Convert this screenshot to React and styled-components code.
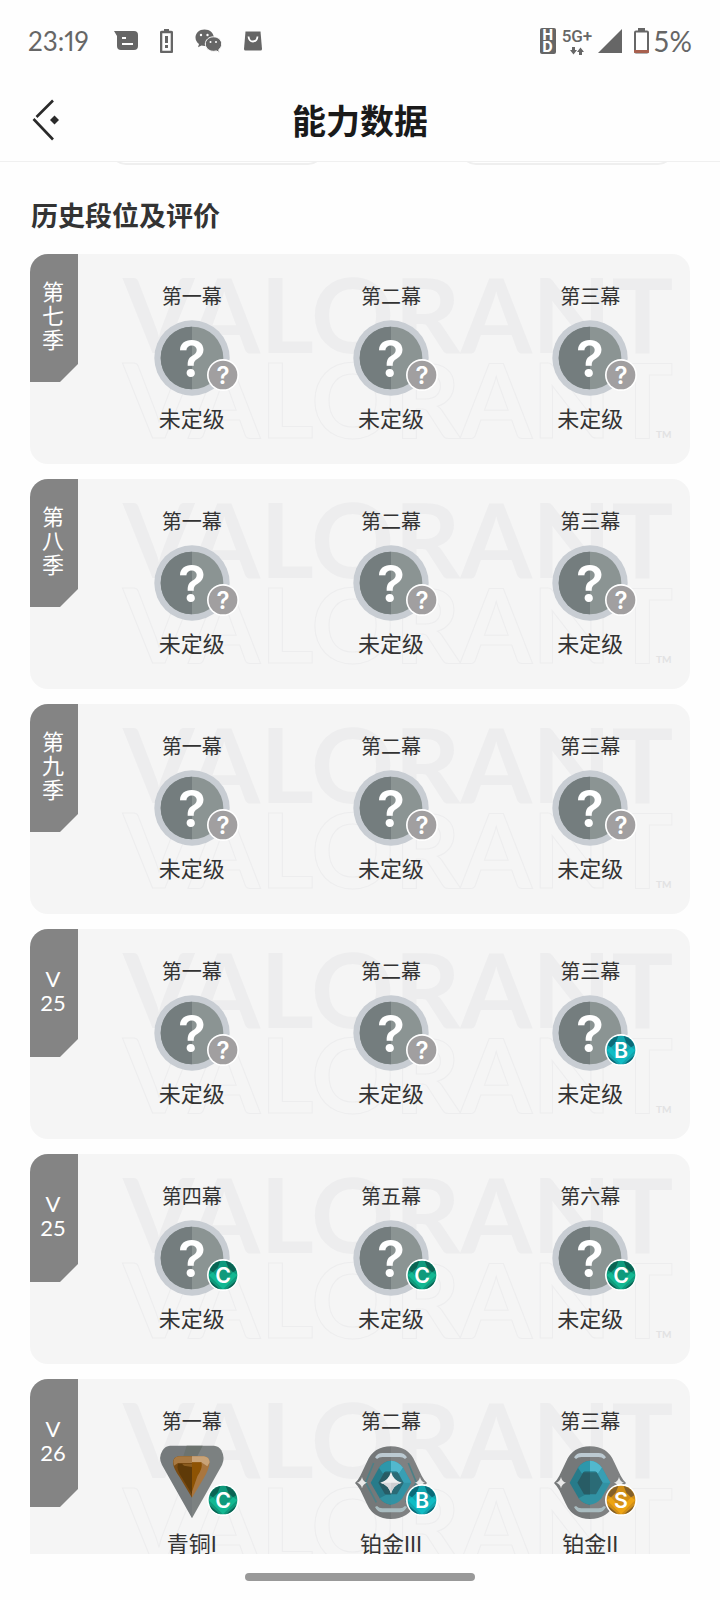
import React from "react";
import styled, { createGlobalStyle } from "styled-components";

const seasons = [
  {
    id: "s7",
    tag: ["第", "七", "季"],
    acts: [
      { name: "第一幕", rank: "未定级", emblem: "none", grade: "?" },
      { name: "第二幕", rank: "未定级", emblem: "none", grade: "?" },
      { name: "第三幕", rank: "未定级", emblem: "none", grade: "?" },
    ],
  },
  {
    id: "s8",
    tag: ["第", "八", "季"],
    acts: [
      { name: "第一幕", rank: "未定级", emblem: "none", grade: "?" },
      { name: "第二幕", rank: "未定级", emblem: "none", grade: "?" },
      { name: "第三幕", rank: "未定级", emblem: "none", grade: "?" },
    ],
  },
  {
    id: "s9",
    tag: ["第", "九", "季"],
    acts: [
      { name: "第一幕", rank: "未定级", emblem: "none", grade: "?" },
      { name: "第二幕", rank: "未定级", emblem: "none", grade: "?" },
      { name: "第三幕", rank: "未定级", emblem: "none", grade: "?" },
    ],
  },
  {
    id: "v25-1",
    tag: ["V", "25"],
    acts: [
      { name: "第一幕", rank: "未定级", emblem: "none", grade: "?" },
      { name: "第二幕", rank: "未定级", emblem: "none", grade: "?" },
      { name: "第三幕", rank: "未定级", emblem: "none", grade: "B" },
    ],
  },
  {
    id: "v25-2",
    tag: ["V", "25"],
    acts: [
      { name: "第四幕", rank: "未定级", emblem: "none", grade: "C" },
      { name: "第五幕", rank: "未定级", emblem: "none", grade: "C" },
      { name: "第六幕", rank: "未定级", emblem: "none", grade: "C" },
    ],
  },
  {
    id: "v26-1",
    tag: ["V", "26"],
    acts: [
      { name: "第一幕", rank: "青铜I", emblem: "bronze", grade: "C" },
      { name: "第二幕", rank: "铂金III", emblem: "platinum3", grade: "B" },
      { name: "第三幕", rank: "铂金II", emblem: "platinum2", grade: "S" },
    ],
  },
];

const gradeColors = {
  "?": { base: "#a19fa0" },
  B: { base: "#12a5ae", dark: "#0b6a78", light: "#10bcc4" },
  C: { base: "#0f9a7c", dark: "#0a6454", light: "#12b892" },
  S: { base: "#d28f17", dark: "#84602a", light: "#eda414" },
};

function StatusIcons() {
  return (
    <StIconGroup>
      <svg width="24" height="20" viewBox="0 0 24 20">
        <path
          d="M0 0H20Q24 0 24 4V15Q24 19 20 19H7Q3 19 3 15V5Z"
          fill="#666"
        />
        <path d="M8 7h4M8 13h11" stroke="#fff" strokeWidth="2" />
      </svg>
      <svg width="13" height="24" viewBox="0 0 13 24">
        <path d="M4 0h5v3H4z" fill="#666" />
        <rect x="1" y="3" width="11" height="20" rx="1" fill="#fff" stroke="#666" strokeWidth="2.600" />
        <path d="M5 7h3v7H5zM5 16h3v3H5z" fill="#666" />
      </svg>
      <svg width="27" height="24" viewBox="0 0 27 24">
        <path
          d="M9.500 0.500C4.300 0.500 0.500 4 0.500 8.600C0.500 11.200 1.800 13.500 4 15L3 18.200L6.500 16.400C7.400 16.700 8.500 16.900 9.500 16.900C14.700 16.900 18.800 13.300 18.800 8.700C18.800 4 14.700 0.500 9.500 0.500Z"
          fill="#666"
        />
        <path
          d="M18.500 7.800C13.800 7.800 10.300 11 10.300 15C10.300 19 13.900 22.300 18.500 22.300C19.500 22.300 20.500 22.100 21.300 21.900L24.500 23.500L23.700 20.700C25.600 19.300 26.700 17.300 26.700 15C26.700 11 23.200 7.800 18.500 7.800Z"
          fill="#666"
          stroke="#fff"
        />
        <circle cx="6" cy="6" r="1.200" fill="#fff" />
        <circle cx="12.500" cy="6" r="1.200" fill="#fff" />
        <circle cx="15.500" cy="13" r="1" fill="#fff" />
        <circle cx="21" cy="13" r="1" fill="#fff" />
      </svg>
      <svg width="18" height="20" viewBox="0 0 18 20">
        <path d="M1.500 0.500H16.500L18 18Q18 19.500 16.500 19.500H1.500Q0 19.500 0 18Z" fill="#666" />
        <path d="M4.500 5.500Q5 10.500 9 10.500Q13 10.500 13.500 5.500" fill="none" stroke="#fff" strokeWidth="1.800" />
      </svg>
    </StIconGroup>
  );
}

function UnrankedEmblem() {
  return (
    <StEmblemSvg viewBox="0 0 228 228">
      <circle cx="114" cy="114" r="113" fill="#c8cdd3" />
      <circle cx="114" cy="114" r="94" fill="#8b9493" />
      <path d="M114 20a94 94 0 0 0 0 188z" fill="#747d7e" />
      <StGlyph x="114" y="170" size={154}>
        ?
      </StGlyph>
    </StEmblemSvg>
  );
}

function BronzeEmblem() {
  return (
    <StEmblemSvg viewBox="0 0 228 228">
      <path d="M48 2H114V220L24 60Q12 38 26 16Q34 3 48 2Z" fill="#757a7c" />
      <path d="M114 2H180Q194 3 202 16Q214 38 204 60L114 220Z" fill="#7c8181" />
      <path d="M98 2H114V34H88ZM114 2H146L130 34H114Z" fill="#6c736f" />
      <path d="M74 34H114V158L78 98Q58 72 57 52Q58 36 74 34Z" fill="#7a4a10" />
      <path d="M114 34H150Q166 36 167 52Q165 74 150 98L114 158Z" fill="#a9763e" />
      <path d="M74 34H114V54H72L60 62Q52 38 74 34Z" fill="#a87942" />
      <path d="M114 34H150Q166 36 167 52L160 64L142 52H114Z" fill="#c9a377" />
      <path d="M72 56H114V148L84 98Q66 72 72 56Z" fill="#5f3a08" />
      <path d="M114 52H142Q148 68 130 94L114 140Z" fill="#8e5303" />
      <path d="M84 56H114V66L90 62Z" fill="#8b5c1f" />
    </StEmblemSvg>
  );
}

function PlatinumEmblem({ star }) {
  return (
    <StEmblemSvg viewBox="0 0 228 228">
      <path d="M6 114Q16 104 22 92L42 50Q62 4 114 4V222Q62 222 42 178L22 136Q16 124 6 114Z" fill="#757879" />
      <path d="M222 114Q212 104 206 92L186 50Q166 4 114 4V222Q166 222 186 178L206 136Q212 124 222 114Z" fill="#7f8182" />
      {star && (
        <path
          d="M62 54L38 112L70 172M166 54L190 112L158 172"
          fill="none"
          stroke="#4d8087"
          strokeWidth="5"
        />
      )}
      <path d="M66 37Q74 24 88 24H140Q154 24 162 37L156 42Q150 36 140 36H88Q78 36 72 42Z" fill="#bccad2" />
      <path d="M66 186Q74 202 88 202H140Q154 202 162 186L156 183Q150 190 140 190H88Q78 190 72 183Z" fill="#a9bcc0" />
      <path d="M53 113L78 68Q92 48 114 47V179Q94 178 80 160Z" fill="#277b8a" />
      <path d="M175 113L150 68Q136 48 114 47V179Q134 178 148 160Z" fill="#3192a4" />
      <path d="M78 68Q92 48 114 47V78H98L90 86Z" fill="#2d97ab" />
      <path d="M114 47Q136 48 150 68L138 86L130 78H114Z" fill="#52b8ce" />
      <path d="M150 68L175 113H150L138 86Z" fill="#389fb4" />
      <path d="M80 160Q94 178 114 179V150H98Z" fill="#3191a0" />
      <path d="M76 113L94 82H114V148H96Z" fill="#285c65" />
      <path d="M152 113L134 82H114V148H132Z" fill="#2b6b76" />
      {star && (
        <g>
          <path d="M114 80Q121 106 146 113Q121 120 114 146Q107 120 82 113Q107 106 114 80Z" fill="#f0f0f1" />
          <path d="M114 113H146Q121 120 114 146Z" fill="#cfcfd2" />
          <path d="M82 113H114V146Q107 120 82 113Z" fill="#d9d9dc" />
        </g>
      )}
      <path d="M27 96Q30 110 42 113Q30 116 27 130Q24 116 12 113Q24 110 27 96Z" fill="#e9e9e9" />
      <path d="M201 96Q204 110 216 113Q204 116 201 130Q198 116 186 113Q198 110 201 96Z" fill="#e9e9e9" />
    </StEmblemSvg>
  );
}

function Emblem({ kind }) {
  if (kind === "bronze") return <BronzeEmblem />;
  if (kind === "platinum3") return <PlatinumEmblem star />;
  if (kind === "platinum2") return <PlatinumEmblem />;
  return <UnrankedEmblem />;
}

function GradeBadge({ grade }) {
  const c = gradeColors[grade];
  const graded = grade !== "?";
  return (
    <StGrade viewBox="0 0 96 96">
      <circle cx="48" cy="48" r="48" fill="#fff" />
      <circle cx="48" cy="48" r="43" fill={c.base} />
      {graded && (
        <g>
          <path d="M8 34Q16 12 40 6L32 26L18 40Z" fill={c.dark} />
          <path d="M88 34Q80 12 56 6L64 26L78 40Z" fill={c.dark} />
          <path d="M5 48L18 40L48 72L78 40L91 48L48 91Z" fill={c.light} />
          <path d="M8 64L38 90Q16 86 8 64Z" fill={c.dark} />
          <path d="M88 64L58 90Q80 86 88 64Z" fill={c.dark} />
        </g>
      )}
      <StGlyph x="48" y={graded ? 71 : 74} size={graded ? 64 : 72}>
        {grade}
      </StGlyph>
    </StGrade>
  );
}

function Watermark() {
  return (
    <StWatermark viewBox="0 0 660 210" aria-hidden="true">
      <text x="93" y="99" fontSize="103" fill="#ededee">
        VALORANT
      </text>
      <text x="93" y="184" fontSize="103" fill="none" stroke="#ededee">
        VALORANT
      </text>
      <text x="626" y="184" fontSize="10" fill="#e2e2e3">
        TM
      </text>
    </StWatermark>
  );
}

function SeasonCard({ season }) {
  return (
    <StCard>
      <Watermark />
      <StTag>
        {season.tag.map((line) => {
          return <span key={line}>{line}</span>;
        })}
      </StTag>
      <StActs>
        {season.acts.map((act) => {
          return (
            <StAct key={act.name}>
              <StActName>{act.name}</StActName>
              <StEmblemWrap>
                <Emblem kind={act.emblem} />
                <GradeBadge grade={act.grade} />
              </StEmblemWrap>
              <StRank>{act.rank}</StRank>
            </StAct>
          );
        })}
      </StActs>
    </StCard>
  );
}

function App() {
  return (
    <StPage>
      <GlobalStyle />
      <StStatusBar>
        <StClock>23:19</StClock>
        <StatusIcons />
        <StStatusRight>
          <StHd>
            <span>H</span>
            <span>D</span>
          </StHd>
          <StNetwork>
            <span>5G+</span>
            <svg width="14" height="8" viewBox="0 0 14 8">
              <path d="M2 0h3v3h2L3.500 7.500L0 3h2zM9 8h3V5h2L10.500 0.500L7 5h2z" fill="#666" />
            </svg>
          </StNetwork>
          <svg width="24" height="24" viewBox="0 0 24 24">
            <path d="M24 0V24H0Z" fill="#666" />
          </svg>
          <StBattery>
            <svg width="15" height="26" viewBox="0 0 15 26">
              <path d="M4 0h7v3H4z" fill="#666" />
              <rect x="1" y="3.500" width="13" height="21" rx="1" fill="none" stroke="#666" strokeWidth="2" />
              <path d="M0 22h15v2q0 1-1 1H1q-1 0-1-1z" fill="#a8604e" />
            </svg>
            <span>5%</span>
          </StBattery>
        </StStatusRight>
      </StStatusBar>
      <StHeader>
        <StBack type="button" aria-label="返回">
          <svg width="28" height="42" viewBox="0 0 28 42">
            <path d="M21 1.500L4.500 18M1.500 20L21 40.500" fill="none" stroke="#2a2a2a" strokeWidth="2.600" />
            <path d="M22.500 16.500L27 21L22.500 25.500L18 21Z" fill="#2a2a2a" />
          </svg>
        </StBack>
        <StTitle>能力数据</StTitle>
      </StHeader>
      <StMain>
        <StPrevRow>
          <StPrevBox />
          <StPrevBox />
        </StPrevRow>
        <StSectionTitle>历史段位及评价</StSectionTitle>
        <StList>
          {seasons.map((season) => {
            return <SeasonCard key={season.id} season={season} />;
          })}
        </StList>
      </StMain>
      <StNavBar>
        <StHandle />
      </StNavBar>
    </StPage>
  );
}

const GlobalStyle = createGlobalStyle`
  * {
    box-sizing: border-box;
  }
  body {
    margin: 0;
    background: #fefefe;
    color: #333;
    font-family: "Noto Sans CJK SC", sans-serif;
  }
`;
const StPage = styled.div`
  height: 100vh;
  display: flex;
  flex-direction: column;
  background: #fefefe;
`;
const StStatusBar = styled.div`
  flex: none;
  height: 80px;
  padding: 2px 28px 0;
  display: flex;
  align-items: center;
  color: #666;
  font-family: Lato, sans-serif;
`;
const StClock = styled.span`
  min-width: 60px;
  font-size: 26px;
  font-variant-numeric: proportional-nums;
`;
const StIconGroup = styled.div`
  display: flex;
  align-items: center;
  gap: 22px;
  margin-left: 25px;
`;
const StStatusRight = styled.div`
  display: flex;
  align-items: center;
  gap: 6px;
  margin-left: auto;
`;
const StHd = styled.div`
  width: 16px;
  height: 26px;
  display: flex;
  flex-direction: column;
  align-items: center;
  justify-content: center;
  border-radius: 2px;
  background: #666;
  color: #fff;
  font: 800 14px/12px Inter, sans-serif;
`;
const StNetwork = styled.div`
  display: flex;
  flex-direction: column;
  align-items: center;
  gap: 3px;
  font: 500 17px/16px Roboto, sans-serif;
`;
const StBattery = styled.div`
  display: flex;
  align-items: center;
  gap: 4px;
  margin-left: 6px;
  font-size: 28px;
`;
const StHeader = styled.header`
  flex: none;
  height: 82px;
  padding: 0 32px 2px;
  display: grid;
  grid-template-columns: 40px 1fr 40px;
  align-items: center;
  border-bottom: 1px solid #f0f0f0;
`;
const StBack = styled.button`
  padding: 0;
  border: none;
  background: none;
  display: flex;
`;
const StTitle = styled.h1`
  margin: 0;
  text-align: center;
  color: #1a1a1a;
  font-size: 34px;
  line-height: 48px;
  font-weight: 700;
`;
const StMain = styled.main`
  flex: 1;
  min-height: 0;
  padding: 0 30px;
  overflow: hidden;
`;
const StPrevRow = styled.div`
  height: 3px;
  display: grid;
  grid-template-columns: 1fr 1fr;
  align-content: end;
  gap: 136px;
  padding: 0 16px 0 80px;
  overflow: hidden;
`;
const StPrevBox = styled.div`
  height: 48px;
  border: 2px solid #efefef;
  border-radius: 16px;
`;
const StSectionTitle = styled.h2`
  margin: 29px 1px 19px;
  color: #333;
  font-size: 27px;
  line-height: 41px;
  font-weight: 700;
`;
const StList = styled.div`
  display: flex;
  flex-direction: column;
  gap: 15px;
`;
const StCard = styled.section`
  position: relative;
  flex: none;
  display: flex;
  align-items: flex-start;
  padding-bottom: 30px;
  border-radius: 18px;
  overflow: hidden;
  background: #f5f5f5;
`;
const StWatermark = styled.svg`
  position: absolute;
  inset: 0;
  width: 100%;
  height: 100%;
  font-family: Lato, sans-serif;
  font-weight: 700;
`;
const StTag = styled.div`
  position: relative;
  flex: none;
  width: 48px;
  height: 128px;
  margin-right: 14px;
  padding: 0 2px 4px 0;
  display: flex;
  flex-direction: column;
  align-items: center;
  justify-content: center;
  background: #848484;
  clip-path: polygon(0 0, 100% 0, 100% 110px, 30px 100%, 0 100%);
  color: #fff;
  font: 22px/24px Lato, "Noto Sans CJK SC", sans-serif;
`;
const StActs = styled.div`
  position: relative;
  flex: 1;
  display: grid;
  grid-template-columns: repeat(3, 1fr);
  padding-top: 28px;
`;
const StAct = styled.div`
  display: flex;
  flex-direction: column;
  align-items: center;
`;
const StActName = styled.span`
  font-size: 20px;
  line-height: 28px;
`;
const StEmblemWrap = styled.div`
  position: relative;
  width: 76px;
  height: 76px;
  margin: 10px 0;
`;
const StEmblemSvg = styled.svg`
  display: block;
  width: 100%;
  height: 100%;
`;
const StGlyph = styled.text`
  fill: #fff;
  font-family: Inter, sans-serif;
  font-weight: 600;
  font-size: ${(props) => props.size}px;
  text-anchor: middle;
`;
const StGrade = styled.svg`
  position: absolute;
  right: -9px;
  bottom: 5px;
  width: 32px;
  height: 32px;
`;
const StRank = styled.span`
  font-family: Roboto, "Noto Sans CJK SC", sans-serif;
  font-size: 22px;
  line-height: 28px;
`;
const StNavBar = styled.footer`
  flex: none;
  height: 46px;
  padding-top: 19px;
`;
const StHandle = styled.div`
  width: 32%;
  height: 8px;
  margin: 0 auto;
  border-radius: 4px;
  background: #999;
`;

export default App;
